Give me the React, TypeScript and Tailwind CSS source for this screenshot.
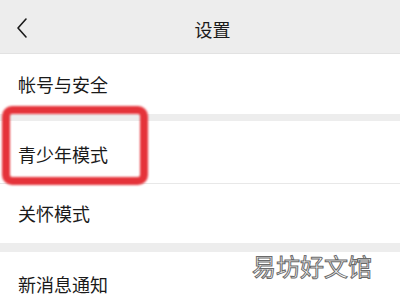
import React from "react";

export default function App() {
  const font = { fontFamily: '"Noto Sans CJK SC", "Noto Sans", sans-serif' };
  return (
    <div className="relative w-[400px] h-[300px] overflow-hidden bg-[#ededed]" style={font}>
      <div className="relative h-[54px] flex items-center bg-[#ededed] border-b border-[#e2e2e2]">
        <svg className="absolute left-[15px] top-[17px]" width="14" height="22" viewBox="0 0 14 22">
          <path d="M11 2 L3 11 L11 20" fill="none" stroke="#1a1a1a" strokeWidth="1.6" strokeLinecap="round" strokeLinejoin="round" />
        </svg>
        <div className="w-full text-center pl-[25px] text-[18px] text-[#1a1a1a] leading-none pt-[4px]">设置</div>
      </div>
      <div className="h-[60px] bg-white flex items-center pl-[18px] text-[18px] text-[#1a1a1a]">帐号与安全</div>
      <div className="h-[7px]" />
      <div className="bg-white">
        <div className="h-[63px] flex items-center pl-[18px] pt-[5px] text-[18px] text-[#1a1a1a] border-b border-[#e8e8e8]">青少年模式</div>
        <div className="h-[59px] flex items-center pl-[18px] text-[18px] text-[#1a1a1a]">关怀模式</div>
      </div>
      <div className="h-[9px]" />
      <div className="h-[64px] bg-white flex items-center pl-[18px] text-[18px] text-[#1a1a1a]">新消息通知</div>

      <div className="absolute left-[2px] top-[106px] w-[146px] h-[79px] border-[8px] border-[#e5333a] rounded-[10px] blur-[0.8px]" />

      <div
        className="absolute left-[252px] top-[254px] text-[24px] leading-none text-white [-webkit-text-stroke:1px_#6a6a6a]"
        style={font}
      >
        易坊好文馆
      </div>
    </div>
  );
}
